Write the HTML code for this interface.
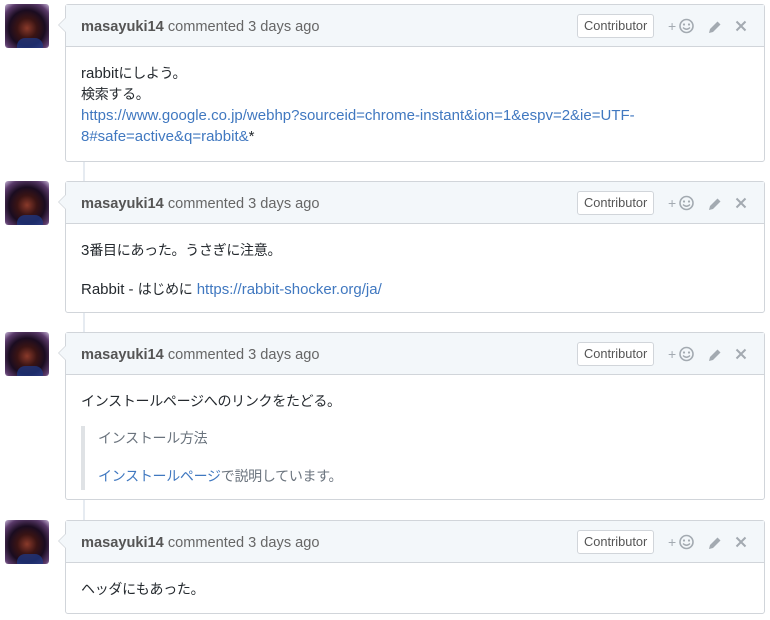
<!DOCTYPE html>
<html><head><meta charset="utf-8"><style>
*{margin:0;padding:0;box-sizing:border-box}
body{width:770px;height:620px;background:#fff;font-family:"Liberation Sans","Noto Sans CJK JP",sans-serif;font-size:15px;color:#24292e;position:relative;overflow:hidden}
.line{position:absolute;left:83px;width:2px;background:#e6ebf1}
.av{position:absolute;left:5px;width:44px;height:44px;border-radius:3px;background:radial-gradient(circle at 50% 55%,#8a3a2a 0,#3a1414 30%,#1a0c20 55%,#5a3a6a 80%,#c9b8d8 100%)}
.av:after{content:"";position:absolute;left:12px;bottom:0;width:26px;height:10px;background:#1e3a8a;border-radius:8px 8px 0 0;opacity:.7}
.box{position:absolute;left:65px;width:700px;border:1px solid #d1d5da;border-radius:3px;background:#fff}
.box:before{content:"";position:absolute;left:-8px;top:12px;border:8px solid transparent;border-left:0;border-right-color:#d1d5da}
.box:after{content:"";position:absolute;left:-7px;top:12px;border:8px solid transparent;border-left:0;border-right-color:#f3f7fa}
.hd{height:42px;background:#f3f7fa;border-bottom:1px solid #d1d5da;position:relative;color:#666;line-height:44px;padding-left:15px;font-size:14.6px}
.hd b{color:#555}
.badge{position:absolute;left:511px;top:9px;height:24px;line-height:22px;padding:0 6px;border:1px solid #d1d5da;border-radius:3px;font-size:12.8px;color:#555;background:#fff}
.ic{position:absolute;top:0}
.bd{padding:16px 15px 0;line-height:21px}
.j{font-size:14px;letter-spacing:-0.3px}
a{color:#4078c0;text-decoration:none}
.bq{border-left:4px solid #dfe2e5;padding-left:13px;color:#6a737d}
</style></head><body>
<div class="line" style="top:160px;height:22px"></div>
<div class="line" style="top:311px;height:22px"></div>
<div class="line" style="top:498px;height:23px"></div>

<svg width="0" height="0" style="position:absolute"><defs>
<g id="icons">
<text x="603" y="26" font-size="14" fill="#a3aab1" font-family="Liberation Sans">+</text>
<circle cx="621.5" cy="21" r="6.5" fill="none" stroke="#a3aab1" stroke-width="1.6"/>
<circle cx="619" cy="19.5" r="1.1" fill="#a3aab1"/><circle cx="624" cy="19.5" r="1.1" fill="#a3aab1"/>
<path d="M618 22.5 Q621.5 26 625 22.5" stroke="#a3aab1" stroke-width="1.3" fill="none"/>
<path d="M644 28 L645 24 L652.5 16.5 L655.5 19.5 L648 27 Z" fill="#a3aab1"/>
<path d="M671.5 16.5 L680.5 25.5 M680.5 16.5 L671.5 25.5" stroke="#a3aab1" stroke-width="2"/>
</g></defs></svg>

<div class="av" style="top:4px"></div>
<div class="box" style="top:4px;height:158px">
<div class="hd"><b>masayuki14</b> commented 3 days ago<span class="badge">Contributor</span><svg class="ic" width="700" height="42" style="left:-1px"><use href="#icons"/></svg></div>
<div class="bd">rabbit<span class="j">にしよう。</span><br><span class="j">検索する。</span><br><a>https://www.google.co.jp/webhp?sourceid=chrome-instant&amp;ion=1&amp;espv=2&amp;ie=UTF-8#safe=active&amp;q=rabbit&amp;</a>*</div>
</div>

<div class="av" style="top:181px"></div>
<div class="box" style="top:181px;height:132px">
<div class="hd"><b>masayuki14</b> commented 3 days ago<span class="badge">Contributor</span><svg class="ic" width="700" height="42" style="left:-1px"><use href="#icons"/></svg></div>
<div class="bd">3<span class="j">番目にあった。うさぎに注意。</span><div style="margin-top:18px">Rabbit - <span class="j">はじめに</span> <a>https://rabbit-shocker.org/ja/</a></div></div>
</div>

<div class="av" style="top:332px"></div>
<div class="box" style="top:332px;height:168px">
<div class="hd"><b>masayuki14</b> commented 3 days ago<span class="badge">Contributor</span><svg class="ic" width="700" height="42" style="left:-1px"><use href="#icons"/></svg></div>
<div class="bd j" style="padding-top:16px;line-height:21px">インストールページへのリンクをたどる。<div class="bq" style="margin-top:14px;padding-top:0"><div style="padding-top:2px">インストール方法</div><div style="margin-top:17px;padding-bottom:3px"><a>インストールページ</a>で説明しています。</div></div></div>
</div>

<div class="av" style="top:520px"></div>
<div class="box" style="top:520px;height:94px">
<div class="hd"><b>masayuki14</b> commented 3 days ago<span class="badge">Contributor</span><svg class="ic" width="700" height="42" style="left:-1px"><use href="#icons"/></svg></div>
<div class="bd j">ヘッダにもあった。</div>
</div>
</body></html>
